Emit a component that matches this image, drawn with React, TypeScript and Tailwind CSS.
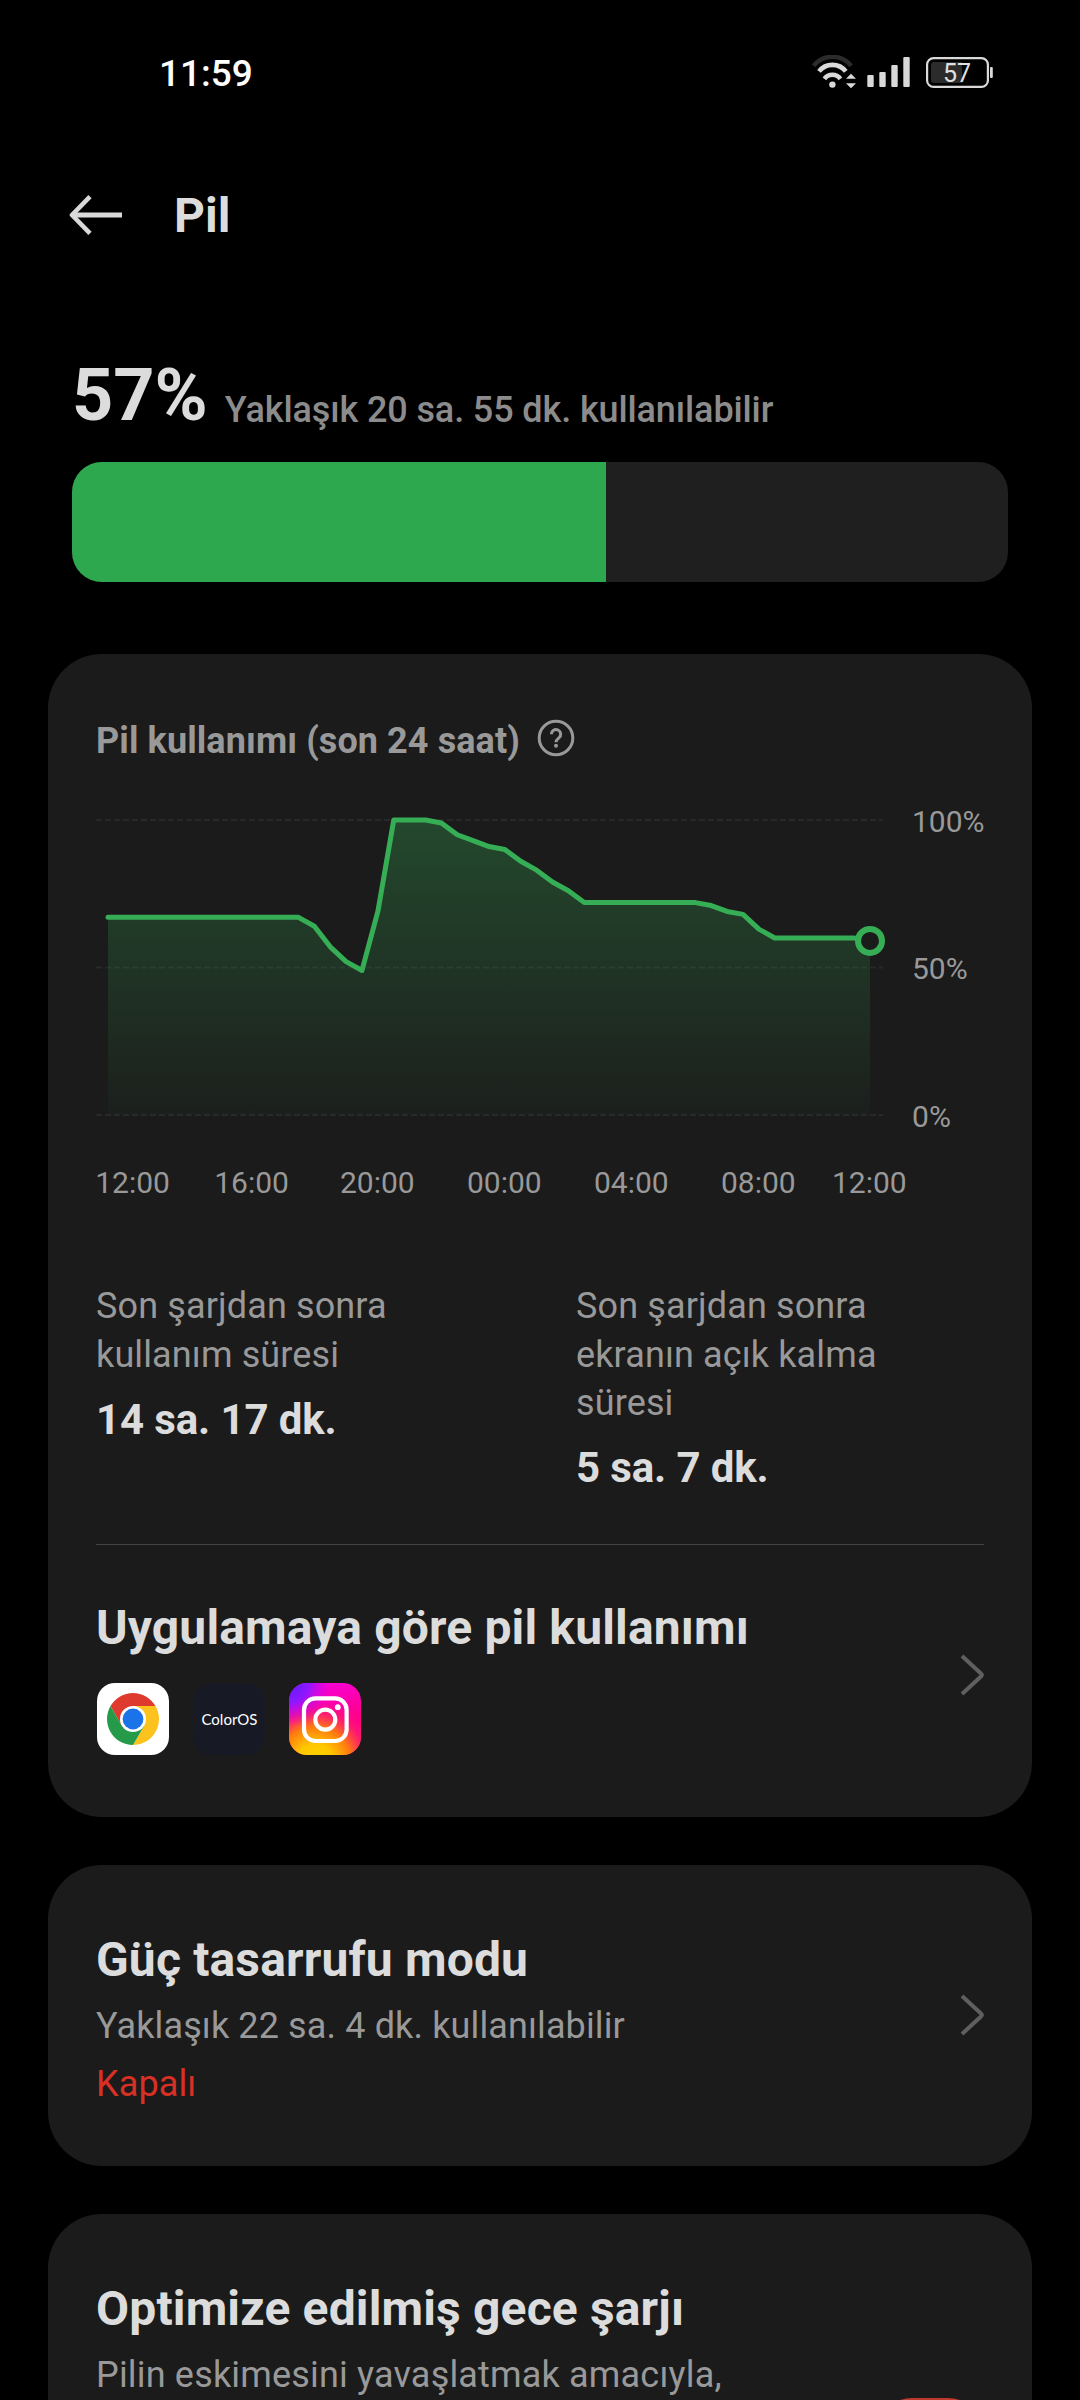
type Tick = {
  label: string;
  x: number;
};

// battery level in percent, one sample every 30 minutes
const LEVELS = [
  67, 67, 67, 67, 67, 67, 67, 67, 67, 67, 67, 67, 67, 64, 57, 52, 49, 69, 100,
  100, 100, 99, 95, 93, 91, 90, 86, 83, 79, 76, 72, 72, 72, 72, 72, 72, 72, 72,
  71, 69, 68, 63, 60, 60, 60, 60, 60, 60, 59,
];

const TIME_TICKS: Tick[] = [
  { label: "12:00", x: -0.8 },
  { label: "16:00", x: 118.2 },
  { label: "20:00", x: 244 },
  { label: "00:00", x: 371 },
  { label: "04:00", x: 498 },
  { label: "08:00", x: 625 },
  { label: "12:00", x: 736 },
];

const PERCENT_TICKS = [100, 50, 0];

const CHART_TOP = 55;
const CHART_HEIGHT = 295;
const CHART_LEFT = 12;
const CHART_WIDTH = 762;

const levelY = (level: number) =>
  CHART_TOP + ((100 - level) / 100) * CHART_HEIGHT;
const sampleX = (i: number) =>
  CHART_LEFT + (i * CHART_WIDTH) / (LEVELS.length - 1);

function StatusBar() {
  return (
    <div className="flex h-[146px] items-center pl-[159px] pr-[86px]">
      <span className="flex-1 text-[37px] font-medium leading-none text-white">
        11:59
      </span>
      <svg width="46" height="36" viewBox="32 15 46 36" fill="none">
        <path d="M33.6 25.8a24 24 0 0 1 37.6 0" stroke="#2b2b2b" strokeWidth="4.4" />
        <path d="M39 31.4a17 17 0 0 1 26.8 0" stroke="#d9d9d9" strokeWidth="4.6" />
        <path d="M44.4 38.8a10 10 0 0 1 16 0" stroke="#d9d9d9" strokeWidth="4.6" />
        <circle cx="52.4" cy="44.6" r="3.2" fill="#d9d9d9" />
        <path d="M71 33.8l5 5h-10zM71 48.2l5-5h-10z" fill="#d9d9d9" />
      </svg>
      <svg width="43" height="36" viewBox="87 15 43 36" fill="#d9d9d9" className="ml-[9px]">
        <rect x="87.3" y="35" width="6.4" height="12" rx="1" />
        <rect x="99.3" y="32" width="6.4" height="15" rx="1" />
        <rect x="111.3" y="25" width="6.4" height="22" rx="1" />
        <rect x="123.3" y="17" width="6.4" height="30" rx="1" />
      </svg>
      <svg width="69" height="36" viewBox="145 15 69 36" className="ml-[15px]">
        <rect x="147.1" y="18.1" width="60.8" height="28.8" rx="6.5" fill="none" stroke="#d9d9d9" strokeWidth="2.2" />
        <path d="M182 22v21h-28a3 3 0 0 1-3-3v-15a3 3 0 0 1 3-3z" fill="#2b2b2b" />
        <rect x="210" y="27" width="2.8" height="11" rx="1" fill="#d9d9d9" />
        <text x="177" y="41.6" fontSize="25" textAnchor="middle" fill="#e0e0e0">
          57
        </text>
      </svg>
    </div>
  );
}

function Chevron({ className }: { className: string }) {
  return (
    <svg width="24" height="42" viewBox="0 0 24 42" fill="none" className={className}>
      <path d="M2 2L21.2 19.8Q22.400 21 21.200 22.200L2 40" stroke="#5f5f5f" strokeWidth="4" />
    </svg>
  );
}

function UsageChart() {
  const points = LEVELS.map((level, i) => `${sampleX(i)},${levelY(level)}`);
  const lastX = sampleX(LEVELS.length - 1);
  const area = `${CHART_LEFT},${levelY(0)} ${points.join(" ")} ${lastX},${levelY(0)}`;

  return (
    <svg width="888" height="517" viewBox="0 0 888 517" className="block overflow-visible">
      <defs>
        <linearGradient id="usage-fill" gradientUnits="userSpaceOnUse" x1="0" y1={CHART_TOP} x2="0" y2={CHART_TOP + CHART_HEIGHT}>
          <stop offset="0" stopColor="#36ae55" stopOpacity="0.31" />
          <stop offset="1" stopColor="#36ae55" stopOpacity="0.03" />
        </linearGradient>
      </defs>
      {PERCENT_TICKS.map((tick) => (
        <g key={tick}>
          <path
            d={`M0 ${levelY(tick)}H787`}
            stroke="#fff"
            strokeOpacity="0.06"
            strokeWidth="2"
            strokeDasharray="6 3"
          />
          <text x="816" y={levelY(tick) + 11.7} fontSize="30" fill="#999">
            {tick}%
          </text>
        </g>
      ))}
      <polygon points={area} fill="url(#usage-fill)" />
      <polyline
        points={points.join(" ")}
        fill="none"
        stroke="#36ae55"
        strokeWidth="5"
        strokeLinecap="round"
        strokeLinejoin="round"
      />
      <circle cx={lastX} cy={levelY(LEVELS[LEVELS.length - 1])} r="12" fill="#1b1b1b" stroke="#36ae55" strokeWidth="6" />
      {TIME_TICKS.map((tick) => (
        <text key={tick.x} x={tick.x} y="428.3" fontSize="30" fill="#999">
          {tick.label}
        </text>
      ))}
    </svg>
  );
}

function ChromeIcon() {
  return (
    <svg width="72" height="72" viewBox="0 0 72 72">
      <rect width="72" height="72" rx="18" fill="#fff" />
      <path d="M13.5 23A26 26 0 0 1 58.5 23H36L24.7 42.5z" fill="#de3a2e" />
      <path d="M58.5 23A26 26 0 0 1 36 62L47.3 42.5L36 23z" fill="#fcc31e" />
      <path d="M36 62A26 26 0 0 1 13.5 23L24.7 42.5H47.3z" fill="#259a48" />
      <circle cx="36" cy="36" r="13" fill="#fff" />
      <circle cx="36" cy="36" r="10.4" fill="#1a73e8" />
    </svg>
  );
}

function InstagramIcon() {
  return (
    <svg width="72" height="72" viewBox="0 0 72 72" fill="none">
      <defs>
        <radialGradient id="ig-warm" gradientUnits="userSpaceOnUse" cx="26" cy="80" r="66">
          <stop offset="0" stopColor="#ffd600" />
          <stop offset="0.28" stopColor="#ffc800" />
          <stop offset="0.55" stopColor="#ff7a10" />
          <stop offset="0.78" stopColor="#ff1a70" stopOpacity="0.8" />
          <stop offset="1" stopColor="#ff00a8" stopOpacity="0" />
        </radialGradient>
        <radialGradient id="ig-violet" gradientUnits="userSpaceOnUse" cx="0" cy="0" r="44">
          <stop offset="0" stopColor="#5b1dff" />
          <stop offset="0.45" stopColor="#8f17ff" />
          <stop offset="1" stopColor="#e800d8" stopOpacity="0" />
        </radialGradient>
        <linearGradient id="ig-pink" x1="0.5" y1="0" x2="0.8" y2="1">
          <stop offset="0" stopColor="#f800d8" />
          <stop offset="0.6" stopColor="#ff0080" />
          <stop offset="1" stopColor="#ff1a60" />
        </linearGradient>
      </defs>
      <rect width="72" height="72" rx="18" fill="url(#ig-pink)" />
      <rect width="72" height="72" rx="18" fill="url(#ig-warm)" />
      <rect width="72" height="72" rx="18" fill="url(#ig-violet)" />
      <rect x="15" y="15.4" width="42.6" height="42.6" rx="11.5" stroke="#fff" strokeWidth="4.2" />
      <circle cx="36.3" cy="36.7" r="10" stroke="#fff" strokeWidth="4.2" />
      <circle cx="48.8" cy="24.2" r="2.9" fill="#fff" />
    </svg>
  );
}

export default function App() {
  return (
    <main className="h-[2400px] w-[1080px] overflow-hidden bg-black font-['Roboto','Noto_Sans',sans-serif] text-[#dcdcdc]">
      <StatusBar />

      <header className="flex h-[138px] items-center pl-[69px]">
        <svg width="53" height="40" viewBox="0 0 53 40" fill="none" stroke="#d9d9d9">
          <path d="M3 20H53" strokeWidth="5" />
          <path d="M21 1.6L3 20L21 38.4" strokeWidth="4.6" strokeLinejoin="round" />
        </svg>
        <h1 className="ml-[52px] mt-px text-[48px] font-bold leading-[56px]">Pil</h1>
      </header>

      <section className="px-[72px] pt-[70px]">
        <div className="flex items-end">
          <span className="text-[72px] font-bold leading-[84px]">57%</span>
          <span className="ml-[17px] pb-1 text-[36px] font-medium leading-[48px] tracking-[-0.12px] text-[#8c8c8c]">
            Yaklaşık 20 sa. 55 dk. kullanılabilir
          </span>
        </div>
        <div className="mt-[24px] h-[120px] overflow-hidden rounded-[30px] bg-[#1f1f1f]">
          <div className="h-full w-[57%] bg-[#2da84e]" />
        </div>
      </section>

      <div className="mt-[72px] flex flex-col gap-12 px-12">
        <section className="rounded-[54px] bg-[#1b1b1b] px-12 pt-[63px]">
          <div className="flex items-center">
            <h2 className="text-[36px] font-bold leading-[48px] tracking-[0.09px] text-[#999]">
              Pil kullanımı (son 24 saat)
            </h2>
            <svg width="38" height="38" viewBox="0 0 38 38" fill="none" stroke="#999" className="mb-[6px] ml-[17px]">
              <circle cx="19" cy="19" r="16.8" strokeWidth="3" />
              <path d="M14.3 15.2a4.7 4.7 0 1 1 7.6 3.7c-1.900 1.500-2.900 2.200-2.900 4.300" strokeWidth="3" />
              <circle cx="19" cy="26.800" r="2" fill="#999" stroke="none" />
            </svg>
          </div>

          <UsageChart />

          <div className="grid h-[262px] grid-cols-[480px_1fr]">
            <div>
              <p className="text-[36px] leading-[48.5px] tracking-[0.13px] text-[#999]">
                Son şarjdan sonra
                <br />
                kullanım süresi
              </p>
              <p className="mt-[17px] text-[42px] font-bold leading-[48px] tracking-[-0.12px]">14 sa. 17 dk.</p>
            </div>
            <div>
              <p className="text-[36px] leading-[48.5px] tracking-[0.13px] text-[#999]">
                Son şarjdan sonra
                <br />
                ekranın açık kalma
                <br />
                süresi
              </p>
              <p className="mt-4 text-[42px] font-bold leading-[48px] tracking-[-0.12px]">5 sa. 7 dk.</p>
            </div>
          </div>

          <div className="flex items-center justify-between border-t border-[#444] pb-[62px] pt-[55px]">
            <div>
              <h2 className="text-[48px] font-bold leading-[56px] tracking-[0.15px]">
                Uygulamaya göre pil kullanımı
              </h2>
              <div className="mt-[27px] flex gap-6 pl-px">
                <ChromeIcon />
                <div className="flex size-[72px] items-center justify-center rounded-[18px] bg-[#171a24] pl-px font-['Lato',sans-serif] text-[15px] text-white">
                  ColorOS
                </div>
                <InstagramIcon />
              </div>
            </div>
            <Chevron className="mb-[6px]" />
          </div>
        </section>

        <section className="flex h-[301px] items-center justify-between rounded-[54px] bg-[#1b1b1b] px-12 pb-[58px] pt-[67px]">
          <div>
            <h2 className="text-[48px] font-bold leading-[56px] tracking-[0.15px]">
              Güç tasarrufu modu
            </h2>
            <p className="mt-[14px] text-[36px] leading-[48px] tracking-[0.13px] text-[#999]">
              Yaklaşık 22 sa. 4 dk. kullanılabilir
            </p>
            <p className="mt-[10px] text-[36px] leading-[48px] tracking-[0.13px] text-[#d93025]">Kapalı</p>
          </div>
          <Chevron className="mb-[11px]" />
        </section>

        <section className="flex h-[320px] justify-between rounded-[54px] bg-[#1b1b1b] px-12 pt-[67px]">
          <div>
            <h2 className="text-[48px] font-bold leading-[56px] tracking-[0.15px]">
              Optimize edilmiş gece şarjı
            </h2>
            <p className="mt-[14px] text-[36px] leading-[48px] tracking-[0.18px] text-[#999]">
              Pilin eskimesini yavaşlatmak amacıyla,
            </p>
          </div>
          <div className="mt-[117px] h-[72px] w-[108px] rounded-full bg-[#c0392f]" />
        </section>
      </div>
    </main>
  );
}
